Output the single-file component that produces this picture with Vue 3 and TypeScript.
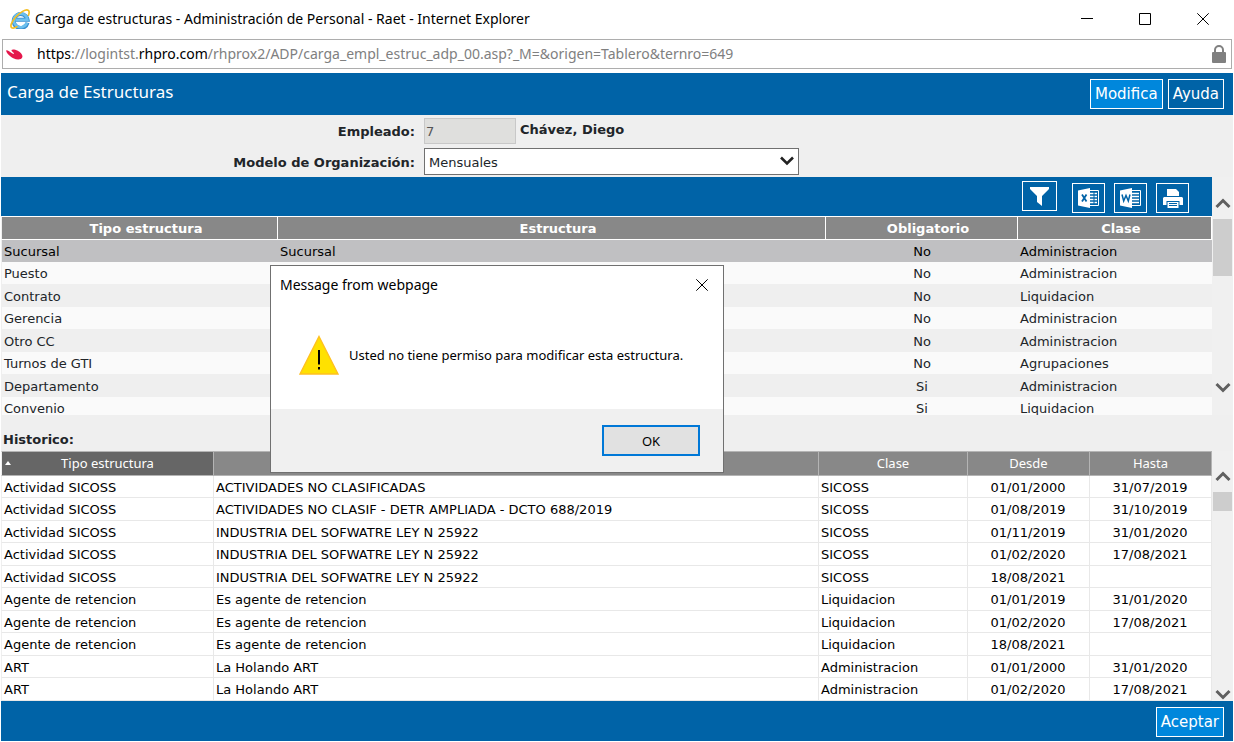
<script setup lang="ts">
import { ref } from 'vue'

interface StructureRow {
  type: string
  structure: string
  required: string
  category: string
}

interface HistoryRow {
  type: string
  structure: string
  category: string
  from: string
  to: string
}

const model = ref('Mensuales')
const employeeId = ref('7')
const selected = ref(0)
const dialogOpen = ref(true)

const structures: StructureRow[] = [
  { type: 'Sucursal', structure: 'Sucursal', required: 'No', category: 'Administracion' },
  { type: 'Puesto', structure: '', required: 'No', category: 'Administracion' },
  { type: 'Contrato', structure: '', required: 'No', category: 'Liquidacion' },
  { type: 'Gerencia', structure: '', required: 'No', category: 'Administracion' },
  { type: 'Otro CC', structure: '', required: 'No', category: 'Administracion' },
  { type: 'Turnos de GTI', structure: '', required: 'No', category: 'Agrupaciones' },
  { type: 'Departamento', structure: '', required: 'Si', category: 'Administracion' },
  { type: 'Convenio', structure: '', required: 'Si', category: 'Liquidacion' },
]

const history: HistoryRow[] = [
  { type: 'Actividad SICOSS', structure: 'ACTIVIDADES NO CLASIFICADAS', category: 'SICOSS', from: '01/01/2000', to: '31/07/2019' },
  { type: 'Actividad SICOSS', structure: 'ACTIVIDADES NO CLASIF - DETR AMPLIADA - DCTO 688/2019', category: 'SICOSS', from: '01/08/2019', to: '31/10/2019' },
  { type: 'Actividad SICOSS', structure: 'INDUSTRIA DEL SOFWATRE LEY N 25922', category: 'SICOSS', from: '01/11/2019', to: '31/01/2020' },
  { type: 'Actividad SICOSS', structure: 'INDUSTRIA DEL SOFWATRE LEY N 25922', category: 'SICOSS', from: '01/02/2020', to: '17/08/2021' },
  { type: 'Actividad SICOSS', structure: 'INDUSTRIA DEL SOFWATRE LEY N 25922', category: 'SICOSS', from: '18/08/2021', to: '' },
  { type: 'Agente de retencion', structure: 'Es agente de retencion', category: 'Liquidacion', from: '01/01/2019', to: '31/01/2020' },
  { type: 'Agente de retencion', structure: 'Es agente de retencion', category: 'Liquidacion', from: '01/02/2020', to: '17/08/2021' },
  { type: 'Agente de retencion', structure: 'Es agente de retencion', category: 'Liquidacion', from: '18/08/2021', to: '' },
  { type: 'ART', structure: 'La Holando ART', category: 'Administracion', from: '01/01/2000', to: '31/01/2020' },
  { type: 'ART', structure: 'La Holando ART', category: 'Administracion', from: '01/02/2020', to: '17/08/2021' },
]
</script>

<template>
  <div class="window">
    <header class="titlebar">
      <svg class="ie" viewBox="0 0 20 20" aria-hidden="true">
        <path d="M17.500 13.800A7 7 0 1 1 17.600 10.800H5.500" fill="none" stroke="#3a8fd0" stroke-width="4" />
        <path d="M17 13.800A6.800 6.800 0 1 1 17.400 10.800H5.500" fill="none" stroke="#6cc0ee" stroke-width="2.600" />
        <path d="M18.500 6.200c.9-2.600.7-4.500-.4-5C15.800.1 9.900 3.100 5.500 8.200 1.400 12.900-.2 17.400 1.800 18.700c1.200.7 3 .2 5-1" fill="none" stroke="#f3bd22" stroke-width="1.700" stroke-linecap="round" />
      </svg>
      <span class="window-title">Carga de estructuras - Administración de Personal - Raet - Internet Explorer</span>
      <button class="caption" type="button" aria-label="Minimizar">
        <svg viewBox="0 0 12 12"><path d="M0 5.500h12" /></svg>
      </button>
      <button class="caption" type="button" aria-label="Maximizar">
        <svg viewBox="0 0 12 12"><path d="M.5.5h11v11H.5z" /></svg>
      </button>
      <button class="caption" type="button" aria-label="Cerrar">
        <svg viewBox="0 0 12 12"><path d="M.3.3l11.400 11.400M11.700.3L.3 11.700" /></svg>
      </button>
    </header>

    <div class="address">
      <svg class="favicon" viewBox="0 0 17 11" aria-hidden="true">
        <path d="M.3 1.300C2 1.200 4 3 6 4.200 7.600 5.100 8.500 4.800 7.900 4 7.100 3 5.300 2 5.500 1 6 0 9 .2 11.800 1.700c3.400 1.800 5.200 4.600 4.500 6.500-.9 2.600-5 2.900-9 1C3.300 7.300-.4 3 .3 1.300z" fill="#e5174b" />
      </svg>
      <span class="url"><b>https</b>://logintst.<b>rhpro.com</b>/rhprox2/ADP/carga_empl_estruc_adp_00.asp?_M=&amp;origen=Tablero&amp;ternro=649</span>
      <svg class="lock" viewBox="0 0 14 18" aria-hidden="true">
        <path d="M3 8V5a4 4 0 0 1 8 0v3" fill="none" stroke="#808080" stroke-width="2" />
        <rect y="7" width="14" height="11" rx="1" fill="#808080" />
      </svg>
    </div>

    <main class="page">
      <div class="heading">
        <h1>Carga de Estructuras</h1>
        <button class="action bright" type="button">Modifica</button>
        <button class="action" type="button">Ayuda</button>
      </div>

      <form class="filters" @submit.prevent>
        <label for="employee">Empleado:</label>
        <div class="employee">
          <input id="employee" v-model="employeeId" type="text" disabled>
          <strong>Chávez, Diego</strong>
        </div>
        <label for="model">Modelo de Organización:</label>
        <div class="select-wrap">
          <select id="model" v-model="model">
            <option>Mensuales</option>
          </select>
          <svg viewBox="0 0 14 10" aria-hidden="true"><path d="M1 1.500l6 6 6-6" fill="none" stroke="#222" stroke-width="2.600" /></svg>
        </div>
      </form>

      <section class="panel current">
        <div class="content">
          <div class="toolbar">
            <button class="tool wide" type="button" aria-label="Filtrar">
              <svg width="19" height="19" viewBox="0 0 19 19"><path d="M0 0h19v2l-7 7v10l-5-4V9L0 2z" fill="#fff" /></svg>
            </button>
            <button class="tool" type="button" aria-label="Exportar a Excel">
              <svg width="21" height="20" viewBox="0 0 21 20">
                <path d="M0 2.500L12 0v20L0 17.500z" fill="#fff" />
                <path d="M12 2.500h8.500v15H12" fill="none" stroke="#fff" />
                <path d="M12 5.500h3.500M12 8.500h3.500M12 11.500h3.500M12 14.500h3.500M16.500 5.500H19M16.500 8.500H19M16.500 11.500H19M16.500 14.500H19" stroke="#fff" stroke-width="1.700" />
                <path d="M4 6.500l4.500 7M8.500 6.500L4 13.500" stroke="#0063a7" stroke-width="1.800" />
              </svg>
            </button>
            <button class="tool" type="button" aria-label="Exportar a Word">
              <svg width="21" height="20" viewBox="0 0 21 20">
                <path d="M0 2.500L12 0v20L0 17.500z" fill="#fff" />
                <path d="M12 2.500h8.500v15H12" fill="none" stroke="#fff" />
                <path d="M12 5.500h7M12 8.500h7M12 11.500h7M12 14.500h7" stroke="#fff" stroke-width="1.500" />
                <path d="M2 6.500l1.700 6.500L6 7.500 8.300 13 10 6.500" fill="none" stroke="#0063a7" stroke-width="1.500" />
              </svg>
            </button>
            <button class="tool" type="button" aria-label="Imprimir">
              <svg width="20" height="19" viewBox="0 0 20 19">
                <path d="M4 0h9l3 3v4H4z" fill="#fff" />
                <path d="M1 8h18l1 1v7h-3.500v-4h-13v4H0V9z" fill="#fff" />
                <path d="M4.500 13h11v6h-11z" fill="#fff" />
                <path d="M6 14.500h8M6 16.500h8" stroke="#0063a7" />
              </svg>
            </button>
          </div>
          <table class="structures">
            <colgroup>
              <col class="c-type"><col><col class="c-required"><col class="c-category">
            </colgroup>
            <thead>
              <tr><th>Tipo estructura</th><th>Estructura</th><th>Obligatorio</th><th>Clase</th></tr>
            </thead>
            <tbody>
              <tr v-for="(row, i) in structures" :key="row.type" :class="{ selected: i === selected }" @click="selected = i">
                <td>{{ row.type }}</td>
                <td>{{ row.structure }}</td>
                <td class="center">{{ row.required }}</td>
                <td>{{ row.category }}</td>
              </tr>
            </tbody>
          </table>
        </div>
        <div class="scroll" aria-hidden="true">
          <svg viewBox="0 0 16 12"><path d="M1.500 10L8 3.500l6.500 6.500" /></svg>
          <div class="track"><div class="thumb long"></div></div>
          <svg viewBox="0 0 16 12"><path d="M1.500 2L8 8.500 14.500 2" /></svg>
        </div>
      </section>

      <h2>Historico:</h2>

      <section class="panel past">
        <div class="content">
          <table class="history">
            <colgroup>
              <col class="h-type"><col><col class="h-category"><col class="h-date"><col class="h-date">
            </colgroup>
            <thead>
              <tr>
                <th class="sorted">Tipo estructura</th><th>Estructura</th><th>Clase</th><th>Desde</th><th>Hasta</th>
              </tr>
            </thead>
            <tbody>
              <tr v-for="(row, i) in history" :key="i">
                <td>{{ row.type }}</td>
                <td>{{ row.structure }}</td>
                <td>{{ row.category }}</td>
                <td class="center">{{ row.from }}</td>
                <td class="center">{{ row.to }}</td>
              </tr>
            </tbody>
          </table>
        </div>
        <div class="scroll" aria-hidden="true">
          <svg viewBox="0 0 16 12"><path d="M1.500 10L8 3.500l6.500 6.500" /></svg>
          <div class="track"><div class="thumb"></div></div>
          <svg viewBox="0 0 16 12"><path d="M1.500 2L8 8.500 14.500 2" /></svg>
        </div>
      </section>

      <footer class="bottom">
        <button class="action bright" type="button">Aceptar</button>
      </footer>
    </main>

    <div v-if="dialogOpen" class="dialog" role="alertdialog" aria-labelledby="dialog-title" aria-describedby="dialog-text">
      <div class="dialog-head">
        <span id="dialog-title">Message from webpage</span>
        <button class="close" type="button" aria-label="Close" @click="dialogOpen = false">
          <svg viewBox="0 0 12 12"><path d="M.3.3l11.400 11.400M11.700.3L.3 11.700" /></svg>
        </button>
      </div>
      <div class="dialog-body">
        <svg viewBox="0 0 40 40" aria-hidden="true">
          <path d="M20 1.500L39 39H1z" fill="#ffe100" stroke="#ffc020" stroke-width="1.400" />
          <path d="M20 15v14.500M20 32v2.500" stroke="#000" stroke-width="2" />
        </svg>
        <span id="dialog-text">Usted no tiene permiso para modificar esta estructura.</span>
      </div>
      <div class="dialog-foot">
        <button class="ok" type="button" @click="dialogOpen = false">OK</button>
      </div>
    </div>
  </div>
</template>

<style>
body {
  margin: 0;
  background: #fff;
}
</style>

<style scoped>
.window {
  position: relative;
  display: flex;
  flex-direction: column;
  box-sizing: border-box;
  height: 100vh;
  padding: 0 1px 1px;
  font: 13px/16px "DejaVu Sans", Verdana, sans-serif;
  color: #212529;
}

button {
  margin: 0;
  padding: 0;
  font: inherit;
  color: inherit;
}

.titlebar {
  display: flex;
  align-items: center;
  flex: none;
  box-sizing: border-box;
  height: 39px;
  padding: 0 1px 1px 9px;
  font: 14px/20px "Noto Sans", "Segoe UI", sans-serif;
  color: #000;
}

.ie {
  width: 20px;
  height: 20px;
  margin-right: 5px;
}

.window-title {
  flex: 1;
}

.caption {
  display: grid;
  place-items: center;
  width: 58px;
  height: 38px;
  border: 0;
  background: none;
}

.caption svg,
.close svg {
  display: block;
  width: 12px;
  height: 12px;
  fill: none;
  stroke: #000;
}

.address {
  display: flex;
  align-items: center;
  flex: none;
  box-sizing: border-box;
  height: 30px;
  margin: 0 1px 4px;
  padding: 0 5px 0 3px;
  border: 1px solid #adadad;
  font: 14px/20px "Noto Sans", "Segoe UI", sans-serif;
  color: #808080;
}

.favicon {
  width: 17px;
  height: 11px;
  margin-right: 14px;
}

.url {
  flex: 1;
}

.url b {
  font-weight: 400;
  color: #000;
}

.lock {
  width: 14px;
  height: 18px;
}

.page {
  display: flex;
  flex-direction: column;
  flex: 1;
  min-height: 0;
  background: #efefef;
}

.heading,
.bottom {
  display: flex;
  align-items: center;
  flex: none;
  gap: 5px;
  box-sizing: border-box;
  height: 42px;
  padding: 0 9px 0 6px;
  background: #0063a7;
}

.bottom {
  justify-content: flex-end;
  height: 40px;
  padding-top: 2px;
}

h1 {
  flex: 1;
  margin: 0;
  padding-bottom: 4px;
  font: 17px/24px "Noto Sans", "Segoe UI", sans-serif;
  color: #fff;
}

.action {
  height: 30px;
  padding: 0 4px;
  border: 1px solid #fff;
  background: #0063a7;
  font-size: 15px;
  color: #fff;
}

.bright {
  background: #0087dc;
}

.filters {
  display: grid;
  grid-template-columns: 414px 1fr;
  grid-auto-rows: 27px;
  gap: 4px 9px;
  align-items: center;
  flex: none;
  padding: 2px 0;
}

.filters label {
  padding-top: 2px;
  font-weight: 700;
  text-align: right;
}

.employee {
  display: flex;
  gap: 4px;
}

.employee strong {
  padding-top: 4px;
}

.employee input {
  box-sizing: border-box;
  width: 92px;
  height: 26px;
  padding: 2px 1px 0;
  border: 1px solid #c8c8c8;
  background: #dfdfdd;
  font: inherit;
  color: #555;
}

.select-wrap {
  position: relative;
  width: 375px;
}

.select-wrap select {
  display: block;
  appearance: none;
  box-sizing: border-box;
  width: 100%;
  height: 27px;
  padding: 2px 24px 0 4px;
  border: 1px solid #707070;
  border-radius: 0;
  background: #fff;
  font: inherit;
  color: #212529;
}

.select-wrap svg {
  position: absolute;
  top: 8px;
  right: 5px;
  width: 14px;
  height: 10px;
  pointer-events: none;
}

.panel {
  display: flex;
  flex: none;
  overflow: hidden;
}

.current {
  height: 238px;
}

.past {
  flex: 1;
  min-height: 0;
}

.content {
  flex: 1;
  overflow: hidden;
}

.toolbar {
  display: flex;
  justify-content: flex-end;
  gap: 9px;
  box-sizing: border-box;
  height: 39px;
  padding: 6px 23px 0 0;
  background: #0063a7;
}

.tool {
  display: grid;
  place-items: center;
  box-sizing: border-box;
  width: 33px;
  height: 30px;
  border: 1px solid #fff;
  background: none;
}

.wide {
  width: 35px;
  margin: -2px 6px 0 0;
}

table {
  table-layout: fixed;
  width: 100%;
  border-collapse: separate;
  border-spacing: 0;
}

th,
td {
  box-sizing: border-box;
  padding: 2px 3px 0;
  overflow: hidden;
  text-align: left;
  white-space: nowrap;
}

.center {
  text-align: center;
}

.c-type {
  width: 277px;
}

.c-required {
  width: 192px;
}

.c-category {
  width: 194px;
}

.structures th {
  height: 24px;
  padding: 1px 0 0 13px;
  border: solid #fff;
  border-width: 1px 1px 1px 0;
  background: #888;
  color: #fff;
  text-align: center;
}

.structures tr > :first-child,
.history tr > :first-child {
  border-left: 1px solid #efefef;
}

.structures td {
  height: 22px;
  padding: 2px 2px 0;
  background: #fafafa;
}

.structures tbody tr:nth-child(odd) td {
  height: 23px;
  background: #efefef;
}

.structures tbody tr.selected td {
  height: 22px;
  background: #c0c0c2;
  color: #000;
}

h2 {
  flex: none;
  box-sizing: border-box;
  height: 36px;
  margin: 0;
  padding: 17px 2px 0;
  font-size: 13px;
  line-height: 16px;
}

.h-type {
  width: 213px;
}

.h-category {
  width: 149px;
}

.h-date {
  width: 122px;
}

.history th {
  height: 25px;
  padding: 0 3px 1px;
  border: solid #b4b4b4;
  border-width: 1px 1px 1px 0;
  background: #888;
  font: 13px/18px "Noto Sans", "Segoe UI", sans-serif;
  color: #fff;
  text-align: center;
}

.history .sorted {
  position: relative;
  background: #666;
}

.sorted::before {
  content: "";
  position: absolute;
  top: 9px;
  left: 3px;
  border: solid transparent;
  border-width: 0 3px 4px;
  border-bottom-color: #fff;
}

.history td {
  height: 22px;
  padding-left: 2px;
  border-right: 1px solid #e8e8e8;
  border-bottom: 1px solid #e8e8e8;
  background: #fff;
  color: #000;
}

.history tbody tr:nth-child(even) td {
  height: 23px;
}

.scroll {
  display: flex;
  flex-direction: column;
  align-items: center;
  flex: none;
  box-sizing: border-box;
  width: 21px;
  padding-top: 20px;
  background: #f0f0f0;
}

.current .scroll {
  padding-bottom: 21px;
}

.past .scroll {
  padding-top: 19px;
}

.scroll svg {
  width: 16px;
  height: 12px;
  flex: none;
  fill: none;
  stroke: #606060;
  stroke-width: 3;
}

.track {
  flex: 1;
  padding-top: 10px;
}

.thumb {
  width: 19px;
  height: 19px;
  background: #cdcdcd;
}

.long {
  height: 57px;
}

.dialog {
  position: absolute;
  top: 265px;
  left: 270px;
  display: flex;
  flex-direction: column;
  box-sizing: border-box;
  width: 454px;
  border: 1px solid #707070;
  background: #fff;
  font: 13px/18px "Noto Sans", "Segoe UI", sans-serif;
  color: #000;
}

.dialog-head {
  display: flex;
  align-items: center;
  justify-content: space-between;
  height: 37px;
  padding: 0 15px 0 9px;
  font-size: 14px;
}

.close {
  border: 0;
  background: none;
}

.dialog-body {
  display: flex;
  align-items: center;
  gap: 10px;
  box-sizing: border-box;
  height: 106px;
  padding: 0 28px 2px;
}

.dialog-body svg {
  width: 40px;
  height: 40px;
}

.dialog-foot {
  display: flex;
  justify-content: flex-end;
  padding: 16px 23px;
  background: #f0f0f0;
}

.ok {
  box-sizing: border-box;
  width: 98px;
  height: 31px;
  border: 2px solid #0078d7;
  background: #e1e1e1;
}
</style>
